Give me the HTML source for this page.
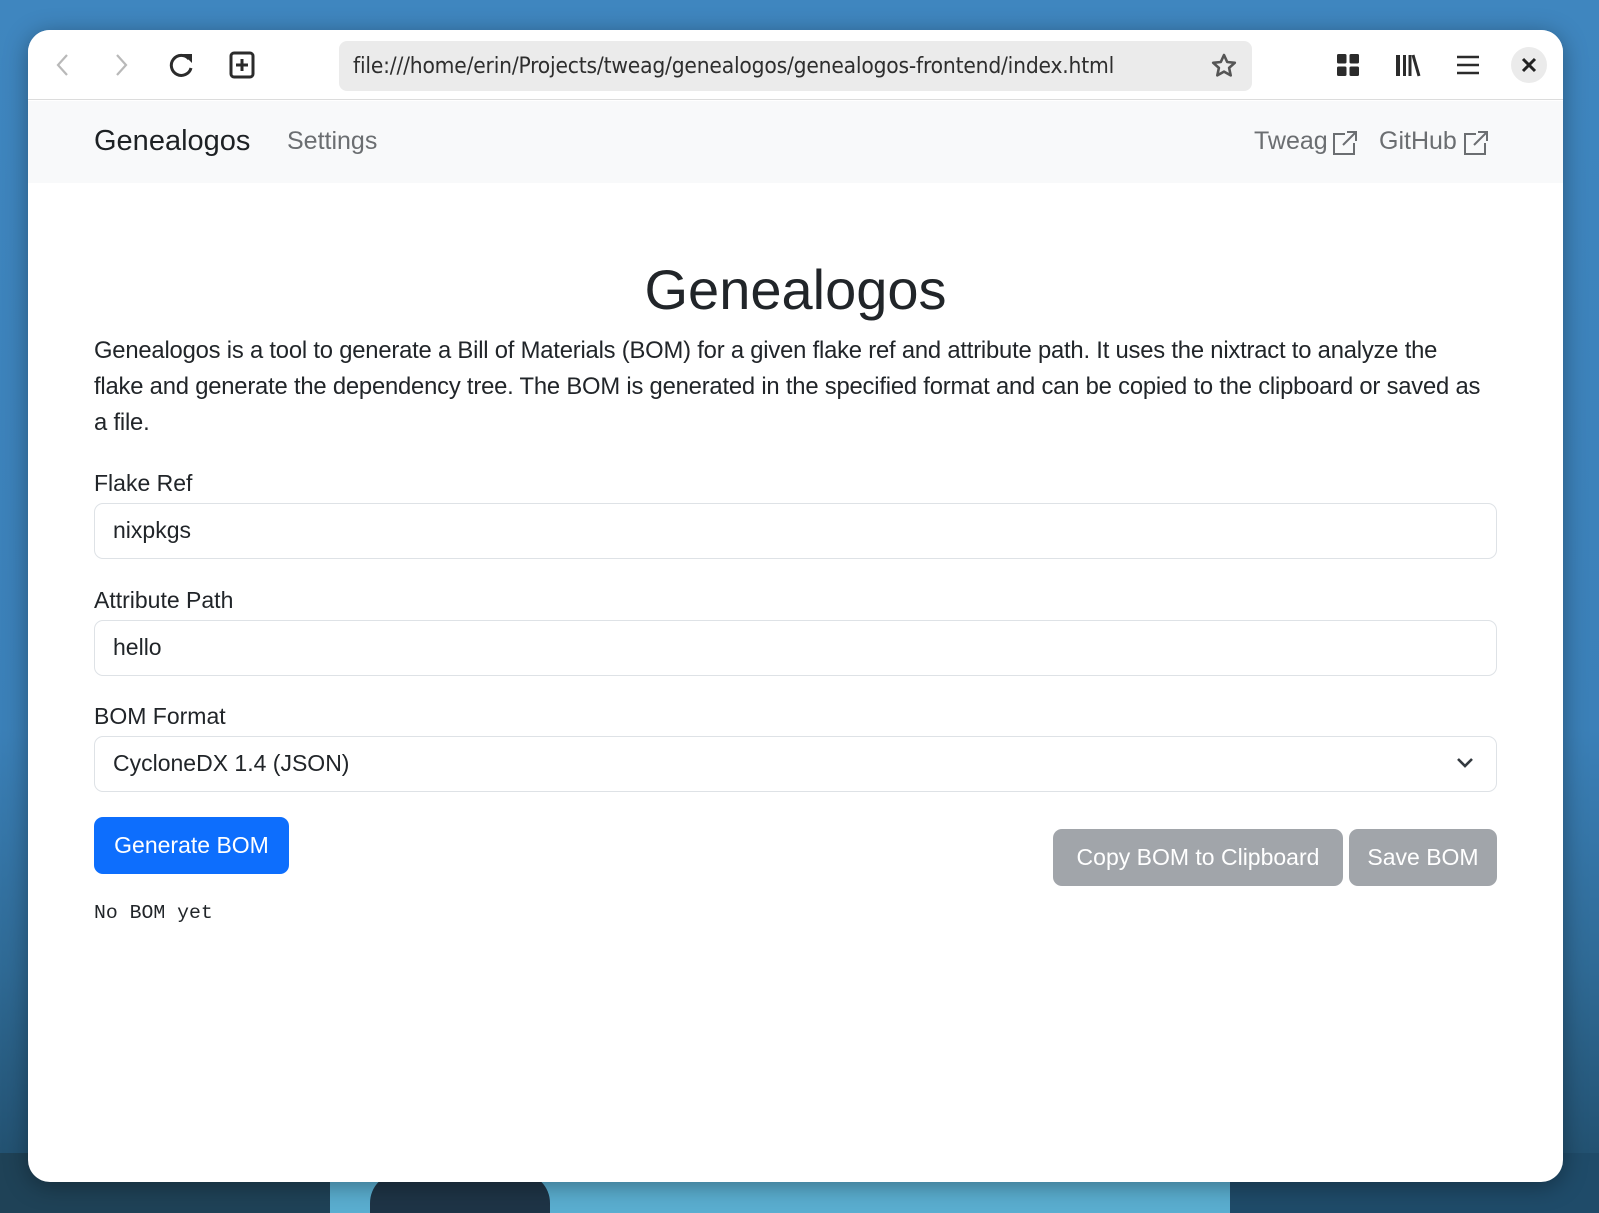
<!DOCTYPE html>
<html><head><meta charset="utf-8"><style>
*{box-sizing:border-box;margin:0;padding:0}
html,body{width:1599px;height:1213px;overflow:hidden}
body{font-family:"Liberation Sans",sans-serif;color:#212529;background:linear-gradient(180deg,#3f86bf 0%,#3b80b8 60%,#2f6a95 80%,#1f4a66 100%);position:relative}
.ground{position:absolute;left:0;right:0;bottom:0;height:60px;background:#5aaed0}
.hill1{position:absolute;left:370px;bottom:0;width:180px;height:40px;background:#1e3446;border-radius:30px 30px 0 0}
.hill2{position:absolute;left:1230px;bottom:0;width:369px;height:60px;background:#1f4b69}
.hill3{position:absolute;left:0;bottom:0;width:330px;height:60px;background:#1f4257}
.win{position:absolute;left:28px;top:30px;width:1535px;height:1152px;background:#fff;border-radius:22px;overflow:hidden;box-shadow:0 4px 24px rgba(0,0,0,.35)}
.tb{position:absolute;left:0;top:0;width:100%;height:70px;background:#fff;border-bottom:1px solid #dcdcdc}
.url{position:absolute;left:311px;top:11px;width:913px;height:50px;background:#ebebeb;border-radius:8px;font-size:22.6px;color:#2e2e2e;line-height:50px;padding-left:14px;font-family:"DejaVu Sans Condensed","Liberation Sans",sans-serif;letter-spacing:-.2px}
.ic{position:absolute;top:35px;transform:translate(-50%,-50%)}
.nav{position:absolute;left:0;top:71px;width:100%;height:82px;background:#f8f9fa}
.nav span{position:absolute;top:26px;font-size:25px;color:#6b6e71}
.page{position:absolute;left:0;top:153px;width:100%}
.abs{position:absolute}
.lbl{position:absolute;left:66px;font-size:23px;color:#212529}
.inp{position:absolute;left:66px;width:1403px;height:56px;border:1.5px solid #dee2e6;border-radius:9px;font-size:23px;line-height:53px;padding-left:18px}
.btn{position:absolute;border-radius:9px;color:#fff;font-size:23px;text-align:center}
</style></head><body>
<div class="ground"></div><div class="hill3"></div><div class="hill1"></div><div class="hill2"></div>
<div class="win">
 <div class="tb">
  <svg class="ic" style="left:35px" width="20" height="26" viewBox="0 0 20 26"><path d="M14 3L5 13l9 10" fill="none" stroke="#b9b9b9" stroke-width="2.2"/></svg>
  <svg class="ic" style="left:93px" width="20" height="26" viewBox="0 0 20 26"><path d="M6 3l9 10-9 10" fill="none" stroke="#b9b9b9" stroke-width="2.2"/></svg>
  <svg class="ic" style="left:154px" width="28" height="28" viewBox="0 0 28 28"><path d="M21 8A10 10 0 1 0 23 17" fill="none" stroke="#2b2b2b" stroke-width="3"/><path d="M15 3h9v9z" fill="#2b2b2b"/></svg>
  <svg class="ic" style="left:214px" width="26" height="28" viewBox="0 0 26 28"><rect x="2" y="2" width="22" height="24" rx="3" fill="none" stroke="#2b2b2b" stroke-width="3"/><path d="M13 8v12M7 14h12" stroke="#2b2b2b" stroke-width="3"/></svg>
  <div class="url">file:///home/erin/Projects/tweag/genealogos/genealogos-frontend/index.html
   <svg style="position:absolute;right:14px;top:11px" width="28" height="28" viewBox="0 0 28 28"><path d="M14 3l3.2 7 7.6.8-5.7 5.1 1.6 7.5L14 19.6l-6.7 3.8 1.6-7.5-5.7-5.1 7.6-.8z" fill="none" stroke="#555" stroke-width="2.6" stroke-linejoin="round"/></svg></div>
  <svg class="ic" style="left:1320px" width="24" height="24" viewBox="0 0 24 24"><rect x="1" y="1" width="9.5" height="9.5" rx="1.5" fill="#2b2b2b"/><rect x="13.5" y="1" width="9.5" height="9.5" rx="1.5" fill="#2b2b2b"/><rect x="1" y="13.5" width="9.5" height="9.5" rx="1.5" fill="#2b2b2b"/><rect x="13.5" y="13.5" width="9.5" height="9.5" rx="1.5" fill="#2b2b2b"/></svg>
  <svg class="ic" style="left:1380px" width="26" height="24" viewBox="0 0 26 24"><rect x="1" y="2" width="4" height="21" fill="#2b2b2b"/><rect x="8" y="2" width="3" height="21" fill="#2b2b2b"/><rect x="13.5" y="2" width="3" height="21" fill="#2b2b2b"/><path d="M18 2l6 21" stroke="#2b2b2b" stroke-width="3"/></svg>
  <svg class="ic" style="left:1440px" width="24" height="22" viewBox="0 0 24 22"><path d="M1 3h22M1 11h22M1 19h22" stroke="#2b2b2b" stroke-width="2.6"/></svg>
  <div class="ic" style="left:1501px;width:36px;height:36px;border-radius:50%;background:#ebebeb"></div>
  <svg class="ic" style="left:1501px" width="16" height="16" viewBox="0 0 16 16"><path d="M2 2l12 12M14 2L2 14" stroke="#222" stroke-width="3"/></svg>
 </div>
 <div class="nav">
  <span style="left:66px;top:24px;color:#1d2124;font-size:29px">Genealogos</span>
  <span style="left:259px">Settings</span>
  <span style="left:1226px">Tweag</span>
  <svg class="abs" style="left:1304px;top:29px" width="26" height="26" viewBox="0 0 26 26"><path d="M13 4H2v20h20V13M15 2h9v9M24 2L11 15" fill="none" stroke="#6b6e71" stroke-width="2"/></svg>
  <span style="left:1351px">GitHub</span>
  <svg class="abs" style="left:1435px;top:29px" width="26" height="26" viewBox="0 0 26 26"><path d="M13 4H2v20h20V13M15 2h9v9M24 2L11 15" fill="none" stroke="#6b6e71" stroke-width="2"/></svg>
 </div>
 <div class="page">
  <div class="abs" style="left:0;width:1535px;text-align:center;top:72px;font-size:56px;color:#212529;line-height:70px">Genealogos</div>
  <div class="abs" style="left:66px;top:150px;font-size:23.8px;line-height:36.2px;white-space:nowrap;letter-spacing:-.2px">Genealogos is a tool to generate a Bill of Materials (BOM) for a given flake ref and attribute path. It uses the nixtract to analyze the<br>flake and generate the dependency tree. The BOM is generated in the specified format and can be copied to the clipboard or saved as<br>a file.</div>
  <div class="lbl" style="top:287px">Flake Ref</div>
  <div class="inp" style="top:320px">nixpkgs</div>
  <div class="lbl" style="top:404px">Attribute Path</div>
  <div class="inp" style="top:437px">hello</div>
  <div class="lbl" style="top:520px">BOM Format</div>
  <div class="inp" style="top:553px">CycloneDX 1.4 (JSON)
   <svg style="position:absolute;right:22px;top:20px" width="18" height="12" viewBox="0 0 18 12"><path d="M2 2l7 7 7-7" fill="none" stroke="#343a40" stroke-width="2.6"/></svg></div>
  <div class="btn" style="left:66px;top:634px;width:195px;height:57px;line-height:57px;background:#0d6efd">Generate BOM</div>
  <div class="btn" style="left:1025px;top:646px;width:290px;height:57px;line-height:57px;background:#a1a5aa">Copy BOM to Clipboard</div>
  <div class="btn" style="left:1321px;top:646px;width:148px;height:57px;line-height:57px;background:#a1a5aa">Save BOM</div>
  <div class="abs" style="left:66px;top:715px;font-family:'Liberation Mono',monospace;font-size:19.8px;line-height:30px">No BOM yet</div>
 </div>
</div>
</body></html>
